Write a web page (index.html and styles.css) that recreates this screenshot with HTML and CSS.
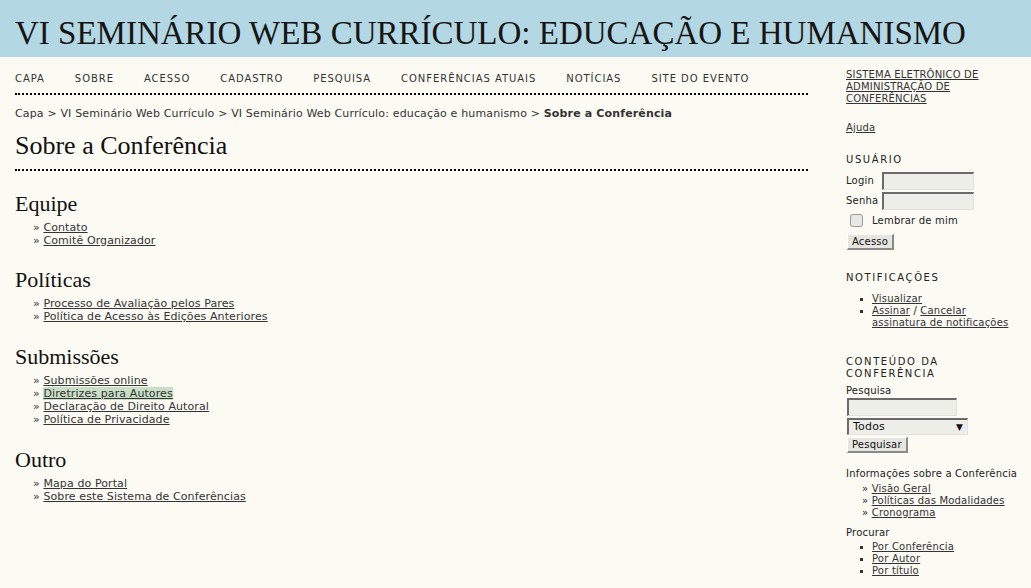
FILE: index.html
```html
<!DOCTYPE html>
<html lang="pt-BR">
<head>
<meta charset="utf-8">
<title>Sobre a Conferência</title>
<link rel="stylesheet" href="styles.css">
</head>
<body>
<header class="header">
  <h1 class="site-title">VI SEMINÁRIO WEB CURRÍCULO: EDUCAÇÃO E HUMANISMO</h1>
</header>
<div class="layout">
  <main class="main">
    <nav class="navbar">
      <a href="#">CAPA</a>
      <a href="#">SOBRE</a>
      <a href="#">ACESSO</a>
      <a href="#">CADASTRO</a>
      <a href="#">PESQUISA</a>
      <a href="#">CONFERÊNCIAS ATUAIS</a>
      <a href="#">NOTÍCIAS</a>
      <a href="#">SITE DO EVENTO</a>
    </nav>
    <div class="breadcrumb">
      <a href="#">Capa</a> &gt; <a href="#">VI Seminário Web Currículo</a> &gt; <a href="#">VI Seminário Web Currículo: educação e humanismo</a> &gt; <strong>Sobre a Conferência</strong>
    </div>
    <h2 class="page-title">Sobre a Conferência</h2>

    <section class="about">
      <h3 class="section-title">Equipe</h3>
      <ul class="plain">
        <li>&raquo; <a href="#">Contato</a></li>
        <li>&raquo; <a href="#">Comitê Organizador</a></li>
      </ul>
    </section>
    <section class="about">
      <h3 class="section-title">Políticas</h3>
      <ul class="plain">
        <li>&raquo; <a href="#">Processo de Avaliação pelos Pares</a></li>
        <li>&raquo; <a href="#">Política de Acesso às Edições Anteriores</a></li>
      </ul>
    </section>
    <section class="about">
      <h3 class="section-title">Submissões</h3>
      <ul class="plain">
        <li>&raquo; <a href="#">Submissões online</a></li>
        <li>&raquo; <a href="#" class="hl">Diretrizes para Autores</a></li>
        <li>&raquo; <a href="#">Declaração de Direito Autoral</a></li>
        <li>&raquo; <a href="#">Política de Privacidade</a></li>
      </ul>
    </section>
    <section class="about">
      <h3 class="section-title">Outro</h3>
      <ul class="plain">
        <li>&raquo; <a href="#">Mapa do Portal</a></li>
        <li>&raquo; <a href="#">Sobre este Sistema de Conferências</a></li>
      </ul>
    </section>
  </main>

  <aside class="sidebar">
    <div class="block">
      <a href="#" class="sys-link">SISTEMA ELETRÔNICO DE ADMINISTRAÇÃO DE CONFERÊNCIAS</a>
    </div>
    <div class="block help"><a href="#">Ajuda</a></div>

    <div class="block user">
      <div class="block-title">USUÁRIO</div>
      <div class="field-row"><label>Login</label><span class="input login"></span></div>
      <div class="field-row"><label>Senha</label><span class="input senha"></span></div>
      <div class="check-row"><span class="checkbox"></span><span>Lembrar de mim</span></div>
      <span class="btn">Acesso</span>
    </div>

    <div class="block notif">
      <div class="block-title">NOTIFICAÇÕES</div>
      <ul class="bullets">
        <li><a href="#">Visualizar</a></li>
        <li class="narrow"><a href="#">Assinar</a> / <a href="#">Cancelar</a> <a href="#">assinatura de notificações</a></li>
      </ul>
    </div>

    <div class="block content">
      <div class="block-title">CONTEÚDO DA CONFERÊNCIA</div>
      <div class="label">Pesquisa</div>
      <span class="input search"></span>
      <span class="select"><span>Todos</span><span class="arrow">&#9660;</span></span>
      <span class="btn">Pesquisar</span>
      <div class="label info">Informações sobre a Conferência</div>
      <ul class="raquo">
        <li>&raquo; <a href="#">Visão Geral</a></li>
        <li>&raquo; <a href="#">Políticas das Modalidades</a></li>
        <li>&raquo; <a href="#">Cronograma</a></li>
      </ul>
      <div class="label browse">Procurar</div>
      <ul class="bullets">
        <li><a href="#">Por Conferência</a></li>
        <li><a href="#">Por Autor</a></li>
        <li><a href="#">Por título</a></li>
      </ul>
    </div>
  </aside>
</div>
</body>
</html>
```

FILE: styles.css
```css
* { box-sizing: border-box; }
html, body { margin: 0; padding: 0; }
body {
  background: #fbfaf3;
  color: #222;
  font-family: "DejaVu Sans", Verdana, sans-serif;
  font-size: 11px;
  overflow: hidden;
}
a { color: #333; }

.header {
  background: #b4d7e4;
  height: 57px;
  padding: 0 15px;
  display: flex;
  align-items: center;
}
.site-title {
  margin: 0;
  font-family: "Liberation Serif", "Times New Roman", serif;
  font-weight: normal;
  font-size: 33px;
  color: #151515;
  white-space: nowrap;
  padding-top: 9px;
}

.layout { display: flex; }
.main {
  width: 793px;
  margin-left: 15px;
}

.navbar {
  display: flex;
  gap: 30px;
  padding: 16px 0 8px;
  border-bottom: 2px dotted #000;
  font-size: 10px;
  line-height: 12px;
  letter-spacing: 0.95px;
}
.navbar a { text-decoration: none; color: #333; }

.breadcrumb {
  margin-top: 12px;
  line-height: 14px;
  color: #333;
  letter-spacing: 0.15px;
}
.breadcrumb a { text-decoration: none; }
.breadcrumb strong { color: #333; }

.page-title {
  margin: 10px 0 0;
  padding-bottom: 8px;
  border-bottom: 2px dotted #000;
  font-family: "Liberation Serif", "Times New Roman", serif;
  font-weight: normal;
  font-size: 26px;
  line-height: 30px;
  color: #111;
}

.about { margin-top: 21px; }
.about + .about { margin-top: 21px; }
.about + .about + .about { margin-top: 22px; }
.section-title {
  margin: 0 0 5px;
  font-family: "Liberation Serif", "Times New Roman", serif;
  font-weight: normal;
  font-size: 22px;
  line-height: 24px;
  color: #111;
}
.plain {
  list-style: none;
  margin: 0;
  padding-left: 18px;
  line-height: 13px;
  color: #333;
  letter-spacing: 0.1px;
}
.hl { background: #c8dfc5; }

.sidebar {
  width: 180px;
  margin-left: 38px;
  padding-top: 12px;
  font-size: 10px;
  line-height: 12px;
  color: #222;
  letter-spacing: 0.2px;
}
.sys-link { display: block; width: 140px; }
.help { margin-top: 17px; }
.block-title {
  letter-spacing: 1.6px;
  color: #222;
}
.user { margin-top: 20px; }
.field-row {
  display: flex;
  align-items: center;
  height: 18px;
  margin-top: 6px;
}
.field-row + .field-row { margin-top: 2px; }
.field-row label { width: 36px; }
.input {
  display: block;
  height: 18px;
  background: #eeeee8;
  border-top: 2px solid #6b6b6b;
  border-left: 2px solid #6b6b6b;
  border-right: 1px solid #e2e2dc;
  border-bottom: 1px solid #e2e2dc;
}
.login, .senha { width: 92px; }
.check-row {
  display: flex;
  align-items: center;
  margin-top: 2px;
  height: 17px;
}
.checkbox {
  width: 13px;
  height: 13px;
  margin: 0 9px 0 4px;
  border: 1px solid #999;
  border-radius: 3px;
  background: #e8e8e4;
}
.btn {
  display: inline-block;
  margin-top: 5px;
  margin-left: 1px;
  height: 16px;
  line-height: 13px;
  padding: 0 4px;
  background: #e6e6e0;
  border-top: 1px solid #fff;
  border-left: 1px solid #fff;
  border-right: 2px solid #8a8a8a;
  border-bottom: 2px solid #8a8a8a;
  font-size: 10px;
  color: #111;
}
.notif { margin-top: 22px; }
.bullets {
  list-style: none;
  margin: 9px 0 0;
  padding-left: 12px;
}
.bullets li { position: relative; padding-left: 14px; }
.bullets li.narrow { width: 156px; }
.bullets li::before {
  content: "";
  position: absolute;
  left: 2px;
  top: 5px;
  width: 3px;
  height: 3px;
  background: #333;
}
.content { margin-top: 27px; }
.content .block-title { width: 110px; }
.label { margin-top: 5px; }
.search { width: 110px; height: 18px; margin-top: 1px; margin-left: 1px; }
.select {
  display: flex;
  justify-content: space-between;
  align-items: center;
  width: 121px;
  height: 17px;
  margin-top: 2px;
  margin-left: 1px;
  padding: 0 4px;
  background: #eeeee8;
  border-top: 2px solid #6b6b6b;
  border-left: 2px solid #6b6b6b;
  border-right: 1px solid #e2e2dc;
  border-bottom: 1px solid #e2e2dc;
  font-size: 11px;
  color: #111;
}
.arrow { font-size: 9px; }
.content .btn { display: table; margin-top: 2px; }
.info { margin-top: 15px; }
.raquo {
  list-style: none;
  margin: 3px 0 0;
  padding-left: 16px;
}
.browse { margin-top: 8px; }
.browse + .bullets { margin-top: 2px; }
```
